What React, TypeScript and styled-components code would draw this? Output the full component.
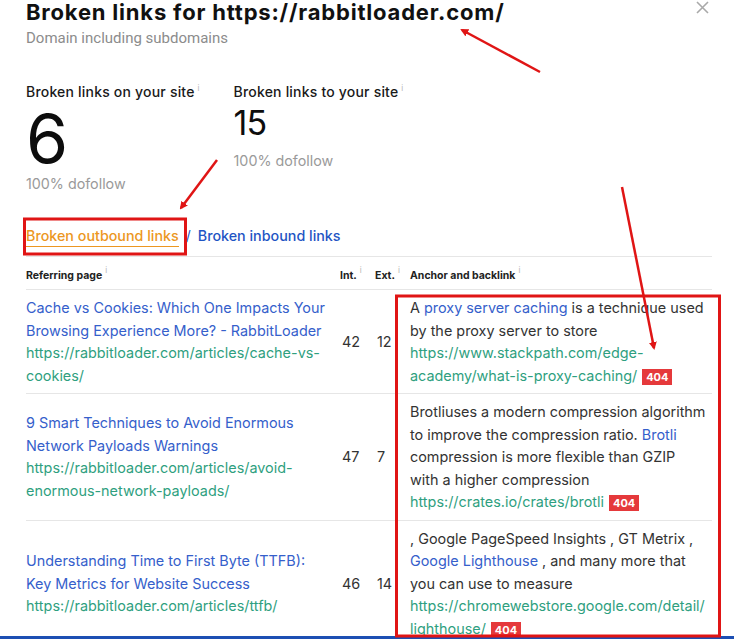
import React from "react";
import styled, { createGlobalStyle } from "styled-components";

const Global = createGlobalStyle`
  html, body { margin: 0; padding: 0; background: #fff; }
  body { font-family: Inter, "Noto Sans", sans-serif; color: #1f1f1f; }
  * { box-sizing: border-box; }
`;

const Page = styled.div`
  position: relative;
  width: 734px;
  height: 639px;
  display: flex;
  flex-direction: column;
  overflow: hidden;
  background: #fff;
`;

const Content = styled.div`
  flex: 1;
  overflow: hidden;
  padding: 0 22px 0 26px;
`;

const BottomBar = styled.div`
  height: 3px;
  background: #1c4fb3;
  flex-shrink: 0;
`;

const Header = styled.div`
  display: flex;
  justify-content: space-between;
  align-items: flex-start;
`;

const Title = styled.h1`
  margin: 0;
  font-family: Inter, sans-serif;
  font-size: 22px;
  font-weight: 700;
  line-height: 25px;
  letter-spacing: 0.8px;
  color: #111;
`;

const Close = styled.button`
  border: none;
  background: none;
  padding: 0;
  margin: 1px 3px 0 0;
  width: 13px;
  height: 13px;
  display: flex;
  cursor: pointer;
`;

const Subtitle = styled.div`
  font-family: Roboto, sans-serif;
  font-size: 15px;
  color: #8c8c8c;
  line-height: 26px;
`;

const Stats = styled.div`
  display: flex;
  gap: 34px;
  margin-top: 28px;
`;

const Stat = styled.div`
  display: flex;
  flex-direction: column;
`;

const StatLabel = styled.div`
  font-size: 14px;
  font-weight: 500;
  line-height: 18px;
  letter-spacing: 0.2px;
  color: #1a1a1a;
`;

const Info = styled.sup`
  font-size: 8px;
  color: #b5b5b5;
  margin-left: 3px;
  font-weight: 400;
  letter-spacing: 0;
  vertical-align: 6px;
`;

const Big = styled.div<{ $size: number; $gap: number; $top: number }>`
  font-size: ${(p) => p.$size}px;
  font-weight: 400;
  line-height: ${(p) => Math.round(p.$size * 1.05)}px;
  color: #0d0d0d;
  letter-spacing: -1px;
  margin-top: ${(p) => p.$top}px;
  margin-bottom: ${(p) => p.$gap}px;
`;

const Dofollow = styled.div`
  font-size: 14.3px;
  color: #9a9a9a;
  line-height: 20px;
`;

const Tabs = styled.div`
  margin-top: 33px;
  display: flex;
  align-items: flex-end;
  gap: 7px;
  padding-bottom: 9px;
  border-bottom: 1px solid #e6e6e6;
`;

const Tab = styled.span<{ $active?: boolean }>`
  font-size: 14.3px;
  font-weight: 500;
  line-height: 18px;
  color: ${(p) => (p.$active ? "#ec9722" : "#1f55c4")};
  border-bottom: ${(p) => (p.$active ? "1px solid #ec9722" : "1px solid transparent")};
  padding-bottom: 1px;
`;

const Sep = styled.span`
  font-size: 14px;
  line-height: 18px;
  color: #1f55c4;
  padding-bottom: 2px;
`;

const Grid = styled.div`
  display: grid;
  grid-template-columns: 314px 35px 35px minmax(0, 1fr);
`;

const HeadCell = styled.div`
  font-size: 10.5px;
  font-weight: 700;
  color: #222;
  padding: 5px 0 5px;
  line-height: 16px;
  border-bottom: 1px solid #e6e6e6;
  white-space: nowrap;
`;

const Cell = styled.div<{ $top?: boolean; $last?: boolean }>`
  display: flex;
  align-items: ${(p) => (p.$top ? "flex-start" : "center")};
  padding: 7px 0 6px;
  border-bottom: ${(p) => (p.$last ? "none" : "1px solid #e6e6e6")};
  font-size: 14.4px;
  line-height: 22.5px;
  color: #333;
  min-width: 0;
`;

const NumCell = styled(Cell)`
  padding-left: 2px;
`;

const TextBlock = styled.div<{ $pad: number }>`
  padding-right: ${(p) => p.$pad}px;
  min-width: 0;
`;

const Blue = styled.span`
  color: #3560cb;
`;

const Green = styled.span`
  color: #2f9f80;
`;

const Badge = styled.span`
  display: inline-block;
  background: #e5393b;
  color: #fff;
  font-size: 11px;
  font-weight: 700;
  line-height: 16px;
  padding: 0 4px;
  margin-left: 5px;
  vertical-align: 0px;
`;

const Overlay = styled.svg`
  position: absolute;
  left: 0;
  top: 0;
  pointer-events: none;
`;

type Row = {
  title: string;
  url: React.ReactNode;
  int: number;
  ext: number;
  anchor: React.ReactNode;
};

const rows: Row[] = [
  {
    title: "Cache vs Cookies: Which One Impacts Your Browsing Experience More? - RabbitLoader",
    url: "https://rabbitloader.com/articles/cache-vs-cookies/",
    int: 42,
    ext: 12,
    anchor: (
      <>
        A <Blue>proxy server caching</Blue> is a technique used by the proxy server to store{" "}
        <Green>https://www.stackpath.com/edge-academy/what-is-proxy-caching/</Green>
        <Badge>404</Badge>
      </>
    ),
  },
  {
    title: "9 Smart Techniques to Avoid Enormous Network Payloads Warnings",
    url: "https://rabbitloader.com/articles/avoid-enormous-network-payloads/",
    int: 47,
    ext: 7,
    anchor: (
      <>
        Brotliuses a modern compression algorithm to improve the compression ratio. <Blue>Brotli</Blue>{" "}
        compression is more flexible than GZIP with a higher compression{" "}
        <Green>https://crates.io/crates/brotli</Green>
        <Badge>404</Badge>
      </>
    ),
  },
  {
    title: "Understanding Time to First Byte (TTFB): Key Metrics for Website Success",
    url: "https://rabbitloader.com/articles/ttfb/",
    int: 46,
    ext: 14,
    anchor: (
      <>
        , Google PageSpeed Insights , GT Metrix , <Blue>Google Lighthouse</Blue> , and many more that you can
        use to measure{" "}
        <Green>
          https://chromewebstore.google.com/detail/
          <wbr />
          lighthouse/
        </Green>
        <Badge>404</Badge>
      </>
    ),
  },
];

export default function App() {
  return (
    <Page>
      <Global />
      <Content>
        <Header>
          <Title>Broken links for https://rabbitloader.com/</Title>
          <Close aria-label="Close">
            <svg width="13" height="13" viewBox="0 0 13 13">
              <path d="M1 1 L12 12 M12 1 L1 12" stroke="#a9a9a9" strokeWidth="1.6" fill="none" />
            </svg>
          </Close>
        </Header>
        <Subtitle>Domain including subdomains</Subtitle>
        <Stats>
          <Stat>
            <StatLabel>
              Broken links on your site<Info>i</Info>
            </StatLabel>
            <Big $size={68} $gap={0} $top={2}>
              6
            </Big>
            <Dofollow>100% dofollow</Dofollow>
          </Stat>
          <Stat>
            <StatLabel>
              Broken links to your site<Info>i</Info>
            </StatLabel>
            <Big $size={34} $gap={10} $top={4}>
              15
            </Big>
            <Dofollow>100% dofollow</Dofollow>
          </Stat>
        </Stats>
        <Tabs>
          <Tab $active>Broken outbound links</Tab>
          <Sep>/</Sep>
          <Tab>Broken inbound links</Tab>
        </Tabs>
        <Grid>
          <HeadCell>
            Referring page<Info>i</Info>
          </HeadCell>
          <HeadCell>
            Int.<Info>i</Info>
          </HeadCell>
          <HeadCell>
            Ext.<Info>i</Info>
          </HeadCell>
          <HeadCell>
            Anchor and backlink<Info>i</Info>
          </HeadCell>
          {rows.map((r, i) => {
            const last = i === rows.length - 1;
            return (
              <React.Fragment key={i}>
                <Cell $last={last}>
                  <TextBlock $pad={10}>
                    <Blue>{r.title}</Blue>
                    <br />
                    <Green>{r.url}</Green>
                  </TextBlock>
                </Cell>
                <NumCell $last={last}>{r.int}</NumCell>
                <NumCell $last={last}>{r.ext}</NumCell>
                <Cell $top $last={last}>
                  <TextBlock $pad={6}>{r.anchor}</TextBlock>
                </Cell>
              </React.Fragment>
            );
          })}
        </Grid>
      </Content>
      <BottomBar />
      <Overlay width="734" height="639" viewBox="0 0 734 639">
        <defs>
          <marker id="ah" markerWidth="8" markerHeight="8" refX="6" refY="4" orient="auto" markerUnits="userSpaceOnUse">
            <path d="M0,0 L8,4 L0,8 z" fill="#e01515" />
          </marker>
        </defs>
        <g stroke="#e01515" strokeWidth="2.5" fill="none">
          <line x1="540" y1="72" x2="462" y2="30" markerEnd="url(#ah)" />
          <line x1="217" y1="160" x2="181" y2="208" markerEnd="url(#ah)" />
          <line x1="622" y1="187" x2="654" y2="348" markerEnd="url(#ah)" />
          <rect x="24.5" y="219" width="161" height="35" strokeWidth="3" />
          <rect x="396.5" y="296" width="323" height="340" strokeWidth="3" />
        </g>
      </Overlay>
    </Page>
  );
}
